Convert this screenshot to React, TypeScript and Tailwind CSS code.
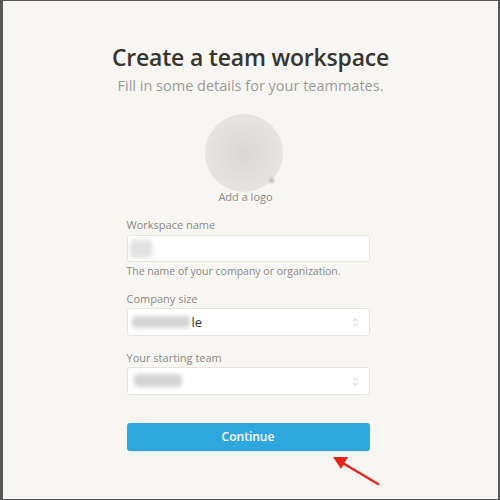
import { ChevronsUpDown } from "lucide-react";

function Blur({ className }: { className: string }) {
  return <span className={`absolute rounded-sm bg-[#d4d4d4] blur-[2px] ${className}`} />;
}

function SelectField({ label, children }: { label: string; children: React.ReactNode }) {
  return (
    <div className="flex flex-col">
      <label className="mb-[2px] text-[11px] leading-[14px] text-[#8a8884]">{label}</label>
      <div className="relative flex h-[28px] items-center rounded-[3px] border border-[#e6e4df] bg-white px-[8px] text-[13px] text-[#37352f]">
        {children}
        <ChevronsUpDown className="ml-auto h-[11px] w-[11px] text-[#a8a6a2]" strokeWidth={1.5} />
      </div>
    </div>
  );
}

export default function App() {
  return (
    <div
      className="flex h-[500px] w-[500px] flex-col items-center border-b border-l-[3px] border-r-2 border-t border-[#575757] bg-[#f7f6f3]"
      style={{ fontFamily: '"Open Sans", "Noto Sans", sans-serif' }}
    >
      <h1 className="mt-[40px] text-[23px] font-semibold leading-[32px] tracking-[-0.2px] text-[#37352f]">
        Create a team workspace
      </h1>
      <p className="mt-[3px] text-[14.5px] leading-[20px] text-[#9b9a97]">Fill in some details for your teammates.</p>

      <div className="ml-[-10px] mt-[18px] flex flex-col items-center">
        <div className="relative ml-[-4px] h-[78px] w-[78px] rounded-full bg-[radial-gradient(circle_at_50%_50%,#d9d8d5_0%,#e3e2df_60%,#ebeae7_100%)] blur-[0.5px]">
          <span className="absolute bottom-[9px] right-[9px] h-[5px] w-[5px] rounded-sm bg-[#bdbcb9] blur-[1px]" />
        </div>
        <span className="mt-[-2px] text-[11px] leading-[14px] text-[#8a8884]">Add a logo</span>
      </div>

      <div className="ml-[-5px] mt-[14px] flex w-[243px] flex-col">
        <label className="mb-[3px] text-[11px] leading-[14px] text-[#8a8884]">Workspace name</label>
        <div className="relative h-[27px] rounded-[3px] border border-[#e6e4df] bg-white">
          <Blur className="left-[2px] top-[4px] h-[18px] w-[22px] bg-[#e2e2e2]" />
        </div>
        <p className="mt-[2px] text-[10.5px] leading-[14px] text-[#8a8884]">The name of your company or organization.</p>

        <div className="mt-[14px] flex flex-col gap-[15px]">
          <SelectField label="Company size">
            <Blur className="left-[4px] top-[7px] h-[12px] w-[58px] bg-[#cfcfcf]" />
            <span className="relative ml-[56px] leading-none">le</span>
          </SelectField>
          <SelectField label="Your starting team">
            <Blur className="left-[6px] top-[6px] h-[13px] w-[48px] bg-[#d2d2d2]" />
          </SelectField>
        </div>

        <button className="mt-[28px] h-[28px] rounded-[3px] bg-[#2ea7df] text-[12px] font-semibold text-white shadow-[0_1px_1px_rgba(0,0,0,0.08)]">
          Continue
        </button>
      </div>

      <svg className="ml-[210px] mt-[2px]" width="50" height="34" viewBox="0 0 50 34">
        <line x1="47" y1="31" x2="10" y2="9" stroke="#e8251c" strokeWidth="2.5" strokeLinecap="round" />
        <polygon points="2,4 17,4 10,16" fill="#e8251c" />
      </svg>
    </div>
  );
}
